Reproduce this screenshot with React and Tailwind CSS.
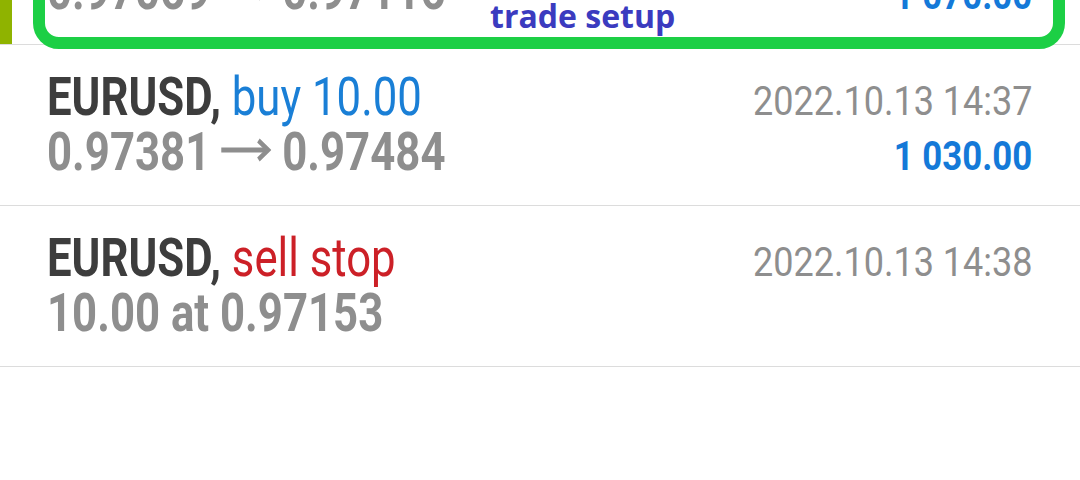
import React from "react";

const orders = [
  {
    symbol: "EURUSD,",
    type: "buy 10.00",
    typeColor: "text-[#1a7fd6]",
    from: "0.97069",
    to: "0.97116",
    time: "2022.10.13 14:21",
    profit: "1 070.00",
    marker: true,
  },
  {
    symbol: "EURUSD,",
    type: "buy 10.00",
    typeColor: "text-[#1a7fd6]",
    from: "0.97381",
    to: "0.97484",
    time: "2022.10.13 14:37",
    profit: "1 030.00",
  },
  {
    symbol: "EURUSD,",
    type: "sell stop",
    typeColor: "text-[#cc2027]",
    detail: "10.00 at 0.97153",
    time: "2022.10.13 14:38",
    profit: "",
  },
];

const Arrow = () => (
  <svg
    width="62"
    height="24"
    viewBox="0 0 62 24"
    className="inline-block align-[8px]"
    fill="none"
    stroke="currentColor"
    strokeWidth="5"
  >
    <path d="M0 12H58" />
    <path d="M46 2.5L58 12L46 21.5" strokeLinejoin="miter" />
  </svg>
);

const OrderRow = ({ order, first }) => (
  <div
    className={`relative border-b border-[#dcdcdc] pt-[24px] pb-[26px] pl-[47px] pr-[48px] ${
      first ? "-mt-[116px]" : ""
    }`}
  >
    {order.marker && (
      <div className="absolute left-0 top-0 bottom-0 w-[12px] bg-[#8fb300]" />
    )}
    <div className="flex h-[55px] items-baseline justify-between leading-[55px]">
      <span className="origin-left scale-x-[0.81] whitespace-nowrap text-[54px]">
        <span className="font-bold text-[#3d3d3d]">{order.symbol}</span>{" "}
        <span className={order.typeColor}>{order.type}</span>
      </span>
      <span className="origin-right scale-x-[0.9] whitespace-nowrap text-[40px] text-[#8e8e8e]">
        {order.time}
      </span>
    </div>
    <div className="flex h-[55px] items-baseline justify-between leading-[55px]">
      <span className="origin-left scale-x-[0.81] whitespace-nowrap text-[54px] font-bold text-[#8e8e8e]">
        {order.detail ? (
          order.detail
        ) : (
          <>
            {order.from} <Arrow /> {order.to}
          </>
        )}
      </span>
      <span className="origin-right scale-x-[0.87] whitespace-nowrap text-[40px] font-bold text-[#1479d8]">
        {order.profit}
      </span>
    </div>
  </div>
);

export default function App() {
  return (
    <div
      className="relative h-[480px] w-[1080px] overflow-hidden bg-white"
      style={{ fontFamily: "Roboto, 'Noto Sans', sans-serif" }}
    >
      <div>
        {orders.map((order, i) => (
          <OrderRow key={i} order={order} first={i === 0} />
        ))}
      </div>

      {/* annotation drawn over the screenshot */}
      <div className="absolute left-[33px] top-[-160px] h-[209px] w-[1032px] rounded-[26px] border-[12px] border-[#1ccf45]" />
      <span
        className="absolute left-[490px] top-0 text-[32px] font-bold leading-[31px] text-[#3b3bbf]"
        style={{ fontFamily: "'Open Sans', sans-serif" }}
      >
        trade setup
      </span>
    </div>
  );
}
